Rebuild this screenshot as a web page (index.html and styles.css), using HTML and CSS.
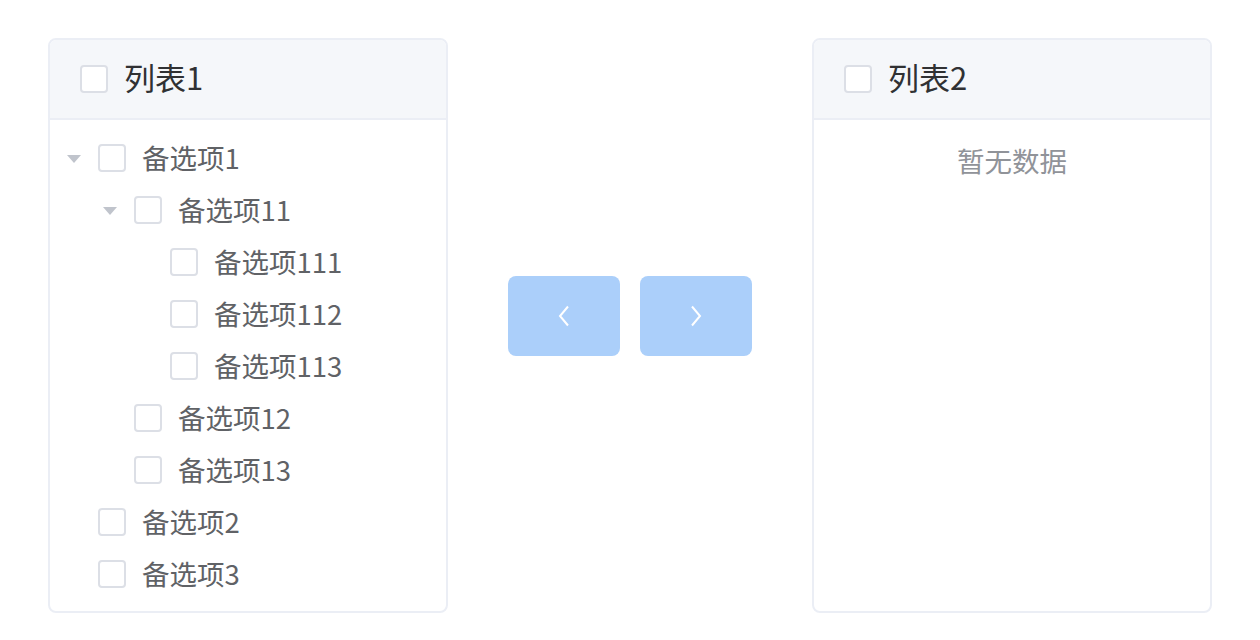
FILE: index.html
```html
<!DOCTYPE html>
<html lang="zh-CN">
<head>
    <meta charset="UTF-8">
    <title>Tree Transfer</title>
    <link rel="stylesheet" href="styles.css">
</head>
<body>
    <div class="transfer">
        <div class="panel">
            <div class="panel-header">
                <span class="checkbox"></span>
                <span class="panel-title">列表1</span>
            </div>
            <div class="panel-body">
                <div class="node">
                    <span class="caret"></span>
                    <span class="checkbox"></span>
                    <span class="label">备选项1</span>
                </div>
                <div class="node level-2">
                    <span class="caret"></span>
                    <span class="checkbox"></span>
                    <span class="label">备选项11</span>
                </div>
                <div class="node level-3">
                    <span class="caret leaf"></span>
                    <span class="checkbox"></span>
                    <span class="label">备选项111</span>
                </div>
                <div class="node level-3">
                    <span class="caret leaf"></span>
                    <span class="checkbox"></span>
                    <span class="label">备选项112</span>
                </div>
                <div class="node level-3">
                    <span class="caret leaf"></span>
                    <span class="checkbox"></span>
                    <span class="label">备选项113</span>
                </div>
                <div class="node level-2">
                    <span class="caret leaf"></span>
                    <span class="checkbox"></span>
                    <span class="label">备选项12</span>
                </div>
                <div class="node level-2">
                    <span class="caret leaf"></span>
                    <span class="checkbox"></span>
                    <span class="label">备选项13</span>
                </div>
                <div class="node">
                    <span class="caret leaf"></span>
                    <span class="checkbox"></span>
                    <span class="label">备选项2</span>
                </div>
                <div class="node">
                    <span class="caret leaf"></span>
                    <span class="checkbox"></span>
                    <span class="label">备选项3</span>
                </div>
            </div>
        </div>

        <div class="buttons">
            <button class="btn" disabled>
                <svg width="14" height="24" viewBox="0 0 14 24"><polyline points="11,2.5 3,12 11,21.5" fill="none" stroke="#fff" stroke-width="2"/></svg>
            </button>
            <button class="btn" disabled>
                <svg width="14" height="24" viewBox="0 0 14 24"><polyline points="3,2.5 11,12 3,21.5" fill="none" stroke="#fff" stroke-width="2"/></svg>
            </button>
        </div>

        <div class="panel">
            <div class="panel-header">
                <span class="checkbox"></span>
                <span class="panel-title">列表2</span>
            </div>
            <div class="panel-body">
                <p class="empty">暂无数据</p>
            </div>
        </div>
    </div>
</body>
</html>
```

FILE: styles.css
```css
body {
    margin: 0;
    font-family: "Noto Sans CJK SC", "Noto Sans", sans-serif;
    background-color: #fff;
}

.transfer {
    display: flex;
    align-items: flex-start;
    padding: 38px 48px;
}

.panel {
    width: 396px;
    height: 571px;
    border: 2px solid #ebeef5;
    border-radius: 8px;
    overflow: hidden;
    background: #fff;
}

.panel-header {
    display: flex;
    align-items: center;
    height: 78px;
    padding-left: 30px;
    background-color: #f5f7fa;
    border-bottom: 2px solid #ebeef5;
}

.panel-title {
    font-size: 31px;
    color: #303133;
    margin-bottom: 6px;
}

.checkbox {
    width: 24px;
    height: 24px;
    border: 2px solid #dcdfe6;
    border-radius: 4px;
    background: #fff;
    margin-right: 16px;
    flex-shrink: 0;
}

.panel-body {
    padding-top: 12px;
}

.node {
    display: flex;
    align-items: center;
    height: 52px;
}

.level-2 {
    padding-left: 36px;
}

.level-3 {
    padding-left: 72px;
}

.caret {
    width: 48px;
    height: 52px;
    display: flex;
    align-items: center;
    justify-content: center;
}

.caret::before {
    content: "";
    border-left: 7px solid transparent;
    border-right: 7px solid transparent;
    border-top: 8px solid #c0c4cc;
    margin-top: 2px;
}

.caret.leaf::before {
    border-top-color: transparent;
}

.label {
    font-size: 27.5px;
    color: #606266;
    margin-bottom: 3px;
}

.buttons {
    display: flex;
    gap: 20px;
    margin: 238px 60px 0;
}

.btn {
    width: 112px;
    height: 80px;
    border: none;
    border-radius: 8px;
    background-color: #abcffa;
    display: flex;
    align-items: center;
    justify-content: center;
    padding: 0;
}

.empty {
    margin: 8px 0 0;
    text-align: center;
    font-size: 27.5px;
    color: #909399;
}
```
